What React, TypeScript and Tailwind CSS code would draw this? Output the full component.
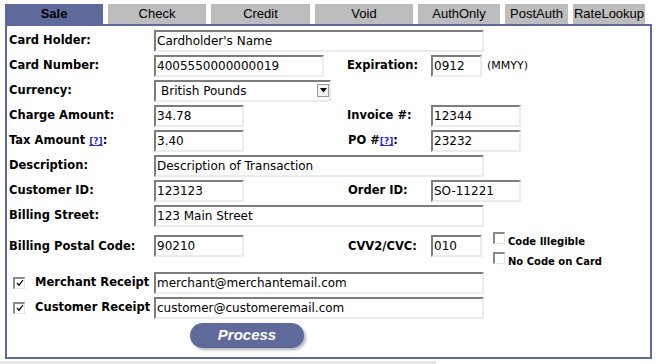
import React from "react";

const BLUE = "bg-[#5f6a9b]";

function Field({ value, w }: { value: string; w: string }) {
  return (
    <div
      className={`${w} h-[22px] border-t-2 border-l-2 border-r-2 border-b-2 border-t-[#7d7d7d] border-l-[#7d7d7d] border-r-[#ececec] border-b-[#ececec] bg-white flex items-center pl-[1px] text-[12px] text-black leading-none whitespace-nowrap overflow-hidden`}
    >
      {value}
    </div>
  );
}

function Label({ children, w = "w-[145px]" }: { children: React.ReactNode; w?: string }) {
  return <div className={`${w} shrink-0 pt-[1px] font-bold text-[11.5px] text-black whitespace-nowrap`}>{children}</div>;
}

function Help() {
  return <span className="text-[9px] text-[#2a2ad0] underline font-bold">[?]</span>;
}

function Check({ checked }: { checked?: boolean }) {
  return (
    <div className="w-[12px] h-[12px] border-t-2 border-l-2 border-r border-b border-t-[#8a8a8a] border-l-[#8a8a8a] border-r-[#e4e4e4] border-b-[#e4e4e4] bg-white flex items-center justify-center shrink-0">
      {checked && (
        <svg width="8" height="8" viewBox="0 0 8 8">
          <path d="M1 4 L3 6.2 L7 1" fill="none" stroke="#000" strokeWidth="1.2" />
        </svg>
      )}
    </div>
  );
}

function Row({ children, h = "h-[25px]" }: { children: React.ReactNode; h?: string }) {
  return <div className={`${h} flex items-center`}>{children}</div>;
}

export default function App() {
  const tabs = [
    { t: "Check", w: "w-[98px]" },
    { t: "Credit", w: "w-[99px]" },
    { t: "Void", w: "w-[98px]" },
    { t: "AuthOnly", w: "w-[82px]" },
    { t: "PostAuth", w: "w-[63px]" },
    { t: "RateLookup", w: "w-[72px]" },
  ];
  return (
    <div className="w-[656px] h-[364px] bg-white overflow-hidden font-['DejaVu_Sans',sans-serif]">
      <div className="flex h-[24px] pt-[4px] pl-[5px] gap-[5px] font-['Liberation_Sans',sans-serif] text-[13px]">
        <div className={`w-[98px] h-[20px] ${BLUE} flex items-center justify-center font-bold text-black`}>Sale</div>
        {tabs.map((x) => (
          <div key={x.t} className={`${x.w} h-[20px] bg-[#bdbdbd] flex items-center justify-center text-black`}>
            {x.t}
          </div>
        ))}
      </div>
      <div className="ml-[5px] w-[647px] h-[335px] border-2 border-[#5f6a9b] pt-[2px] pl-[2px]">
        <Row>
          <Label>Card Holder:</Label>
          <Field value="Cardholder's Name" w="w-[330px]" />
        </Row>
        <Row>
          <Label>Card Number:</Label>
          <div className="w-[193px]">
            <Field value="4005550000000019" w="w-[170px]" />
          </div>
          <Label w="w-[84px]">Expiration:</Label>
          <Field value="0912" w="w-[51px]" />
          <span className="ml-[5px] pt-[1px] text-[11px] text-black">(MMYY)</span>
        </Row>
        <Row>
          <Label>Currency:</Label>
          <div className="w-[177px] h-[22px] border-t-2 border-l-2 border-r-2 border-b-2 border-t-[#7d7d7d] border-l-[#7d7d7d] border-r-[#ececec] border-b-[#ececec] flex items-center justify-between pl-[5px] pr-[0px] text-[12px] text-black">
            <span>British Pounds</span>
            <div className="w-[12px] h-[13px] border border-[#9a9a9a] bg-[#f2f2f2] flex items-center justify-center">
              <svg width="7" height="5" viewBox="0 0 7 5">
                <path d="M0 0 H7 L3.5 4.5 Z" fill="#000" />
              </svg>
            </div>
          </div>
        </Row>
        <Row>
          <Label>Charge Amount:</Label>
          <div className="w-[193px]">
            <Field value="34.78" w="w-[90px]" />
          </div>
          <Label w="w-[84px]">Invoice #:</Label>
          <Field value="12344" w="w-[90px]" />
        </Row>
        <Row>
          <Label>
            Tax Amount <Help />:
          </Label>
          <div className="w-[193px]">
            <Field value="3.40" w="w-[90px]" />
          </div>
          <Label w="w-[84px]">
            <span className="ml-[1px]">
              PO #<Help />:
            </span>
          </Label>
          <Field value="23232" w="w-[90px]" />
        </Row>
        <Row>
          <Label>Description:</Label>
          <Field value="Description of Transaction" w="w-[330px]" />
        </Row>
        <Row>
          <Label>Customer ID:</Label>
          <div className="w-[193px]">
            <Field value="123123" w="w-[90px]" />
          </div>
          <Label w="w-[84px]">
            <span className="ml-[1px]">Order ID:</span>
          </Label>
          <Field value="SO-11221" w="w-[90px]" />
        </Row>
        <Row>
          <Label>Billing Street:</Label>
          <Field value="123 Main Street" w="w-[330px]" />
        </Row>
        <Row h="h-[36px]">
          <Label>Billing Postal Code:</Label>
          <div className="w-[193px]">
            <Field value="90210" w="w-[90px]" />
          </div>
          <Label w="w-[84px]">
            <span className="ml-[1px]">CVV2/CVC:</span>
          </Label>
          <Field value="010" w="w-[51px]" />
          <div className="ml-[11px] flex flex-col self-start mt-[4px]">
            <div className="h-[20px] flex items-start gap-[3px]">
              <Check />
              <span className="mt-[3px] text-[10px] leading-[14px] font-bold text-black">Code Illegible</span>
            </div>
            <div className="h-[20px] flex items-start gap-[3px]">
              <Check />
              <span className="mt-[3px] text-[10px] leading-[14px] font-bold text-black">No Code on Card</span>
            </div>
          </div>
        </Row>
        <div className="h-[6px]" />
        <Row>
          <div className="w-[145px] flex items-center">
            <div className="ml-[4px]">
              <Check checked />
            </div>
            <span className="ml-[10px] pt-[1px] font-bold text-[11.5px] text-black whitespace-nowrap">Merchant Receipt</span>
          </div>
          <Field value="merchant@merchantemail.com" w="w-[330px]" />
        </Row>
        <Row>
          <div className="w-[145px] flex items-center">
            <div className="ml-[4px]">
              <Check checked />
            </div>
            <span className="ml-[10px] pt-[1px] font-bold text-[11.5px] text-black whitespace-nowrap">Customer Receipt</span>
          </div>
          <Field value="customer@customeremail.com" w="w-[330px]" />
        </Row>
        <div className="pl-[181px] pt-[3px]">
          <div className="w-[114px] h-[25px] rounded-full bg-[#5f6a9b] shadow-[2px_2px_3px_rgba(0,0,0,0.3)] flex items-center justify-center font-['Liberation_Sans',sans-serif] font-bold italic text-[15px] text-white">
            Process
          </div>
        </div>
      </div>
      <div className="mt-[2px] w-[436px] h-[4px] bg-[#e6e6e6]" />
    </div>
  );
}
